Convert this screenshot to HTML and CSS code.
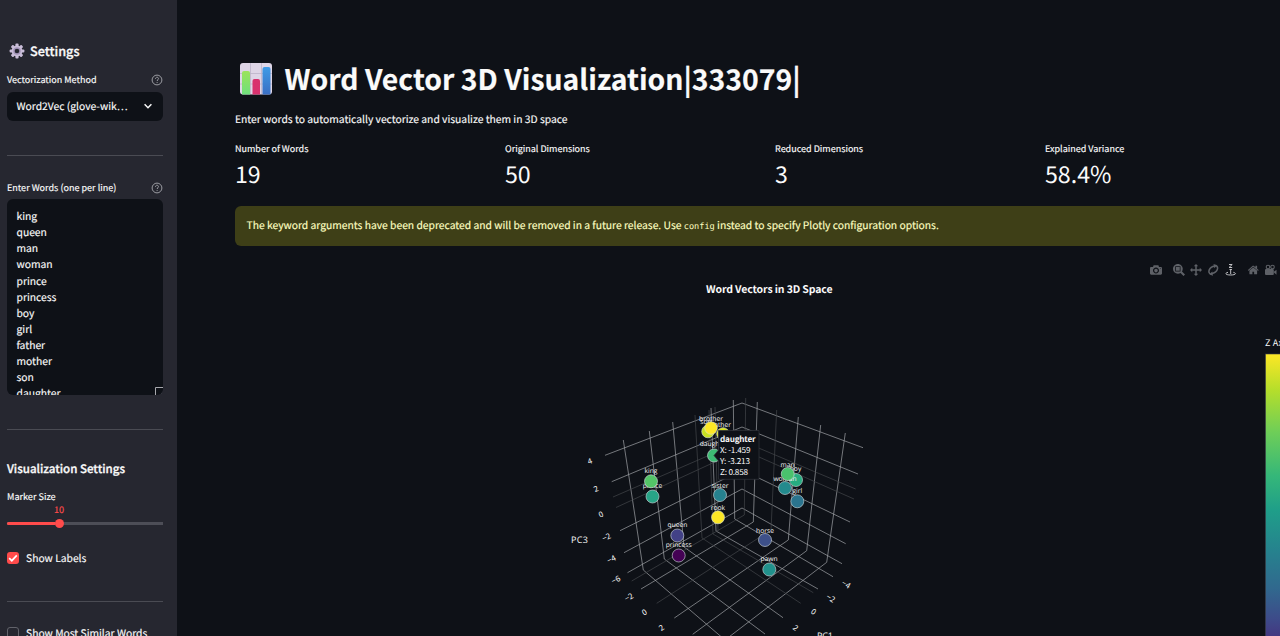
FILE: index.html
```html
<!DOCTYPE html>
<html lang="en">
<head>
<meta charset="utf-8">
<title>Word Vector 3D Visualization</title>
<link rel="stylesheet" href="styles.css">
</head>
<body>
<div class="app">
  <aside class="sidebar">
    <h2 class="side-title">
      <svg class="gear" viewBox="0 0 16 16"><g fill="#c9bdd8"><g id="teeth"><rect x="6.4" y="0.6" width="3.2" height="14.8" rx="1"/><rect x="0.6" y="6.4" width="14.8" height="3.2" rx="1"/></g><use href="#teeth" transform="rotate(45 8 8)"/><circle cx="8" cy="8" r="5.4"/></g><circle cx="8" cy="8" r="3.7" fill="#a393b8"/><circle cx="8" cy="8" r="2.3" fill="#262730"/></svg>
      <span>Settings</span>
    </h2>
    <div class="label-row method-label"><span>Vectorization Method</span>
      <svg class="help" viewBox="0 0 12 12"><circle cx="6" cy="6" r="4.9"/><path d="M4.5 4.8c0-2 3-2 3-.2 0 1.1-1.4 1.2-1.4 2.4M6.1 8v.9"/></svg></div>
    <div class="select"><span>Word2Vec (glove-wik…</span><svg viewBox="0 0 10 10" class="chev"><path d="M1.6 3.3 5 6.7l3.4-3.4"/></svg></div>
    <hr class="rule rule-a">
    <div class="label-row words-label"><span>Enter Words (one per line)</span>
      <svg class="help" viewBox="0 0 12 12"><circle cx="6" cy="6" r="4.9"/><path d="M4.5 4.8c0-2 3-2 3-.2 0 1.1-1.4 1.2-1.4 2.4M6.1 8v.9"/></svg></div>
    <div class="words">king<br>queen<br>man<br>woman<br>prince<br>princess<br>boy<br>girl<br>father<br>mother<br>son<br>daughter
      <svg class="grip" viewBox="0 0 8 8"><path d="M.5 8V.5H8M5.5 7.5l2-2"/></svg></div>
    <hr class="rule rule-b">
    <h3 class="sub-title">Visualization Settings</h3>
    <div class="marker-label">Marker Size</div>
    <div class="slider-value">10</div>
    <div class="slider"><div class="fill"></div><div class="thumb"></div></div>
    <div class="check check-a"><span class="box on"><svg viewBox="0 0 12 12"><path d="M2.2 6.2 4.8 8.7 9.8 3.4"/></svg></span><span>Show Labels</span></div>
    <hr class="rule rule-c">
    <div class="check check-b"><span class="box"></span><span>Show Most Similar Words</span></div>
  </aside>
  <main class="main">
    <h1 class="title">
      <svg class="chart-icon" viewBox="0 0 32 32"><defs><linearGradient id="g1" x2="0" y2="1"><stop stop-color="#9be35a"/><stop offset="1" stop-color="#6fe07c"/></linearGradient><linearGradient id="g2" x2="0" y2="1"><stop stop-color="#3f9be6"/><stop offset="1" stop-color="#3a6fc4"/></linearGradient></defs><rect width="32" height="31.500" rx="3" fill="#ded5e6"/><path d="M0 10.5h32M0 21h32M10.5 0v31M21.5 0v31" stroke="#bdb2c8" stroke-width=".8"/><path d="M2 31.500V10q0-2 2-2h4q2 0 2 2v21.500z" fill="url(#g1)"/><path d="M12.500 31.500V18q0-2 2-2h3.500q2 0 2 2v13.500z" fill="#d9306e"/><path d="M22.500 31.500V6q0-2 2-2h4q2 0 2 2v25.500z" fill="url(#g2)"/></svg>
      <span>Word Vector 3D Visualization|333079|</span>
    </h1>
    <p class="intro">Enter words to automatically vectorize and visualize them in 3D space</p>
    <div class="metrics">
      <div><div class="m-label">Number of Words</div><div class="m-value">19</div></div>
      <div><div class="m-label">Original Dimensions</div><div class="m-value">50</div></div>
      <div><div class="m-label">Reduced Dimensions</div><div class="m-value">3</div></div>
      <div><div class="m-label">Explained Variance</div><div class="m-value">58.4%</div></div>
    </div>
    <div class="alert"><span>The keyword arguments have been deprecated and will be removed in a future release. Use <code>config</code> instead to specify Plotly configuration options.</span></div>
    <svg class="plot" viewBox="235 246 1068 390" width="1068" height="390">
      <defs><linearGradient id="vir" x2="0" y2="1"><stop stop-color="#fde725"/><stop offset=".125" stop-color="#b5de2b"/><stop offset=".27" stop-color="#6ece58"/><stop offset=".42" stop-color="#35b779"/><stop offset=".54" stop-color="#1f9e89"/><stop offset=".68" stop-color="#26828e"/><stop offset=".81" stop-color="#31688e"/><stop offset=".92" stop-color="#3e4989"/><stop offset="1" stop-color="#472f7d"/></linearGradient></defs>
      <g class="modebar">
        <svg x="1150" y="264" width="12" height="12" viewBox="0 0 1000 1000"><path transform="matrix(1 0 0 -1 0 850)" d="m500 450c-83 0-150-67-150-150 0-83 67-150 150-150 83 0 150 67 150 150 0 83-67 150-150 150z m400 150h-120c-16 0-34 13-39 29l-31 93c-6 15-23 28-40 28h-340c-16 0-34-13-39-28l-31-94c-6-15-23-28-40-28h-120c-55 0-100-45-100-100v-450c0-55 45-100 100-100h800c55 0 100 45 100 100v450c0 55-45 100-100 100z m-400-550c-138 0-250 112-250 250 0 138 112 250 250 250 138 0 250-112 250-250 0-138-112-250-250-250z m365 380c-19 0-35 16-35 35 0 19 16 35 35 35 19 0 35-16 35-35 0-19-16-35-35-35z"/></svg>
        <svg x="1173" y="264" width="12" height="12" viewBox="0 0 1000 1000"><path transform="matrix(1 0 0 -1 0 850)" d="m1000-25l-250 251c40 63 63 138 63 218 0 224-182 406-407 406-224 0-406-182-406-406s183-406 407-406c80 0 155 22 218 62l250-250 125 125z m-812 250l0 438 437 0 0-438-437 0z m62 375l313 0 0-312-313 0 0 312z"/></svg>
        <svg x="1190" y="264" width="12" height="12" viewBox="0 0 1000 1000"><path transform="matrix(1 0 0 -1 0 850)" d="m1000 350l-187 188 0-125-250 0 0 250 125 0-188 187-187-187 125 0 0-250-250 0 0 125-188-188 186-187 0 125 252 0 0-250-125 0 187-188 188 188-125 0 0 250 250 0 0-126 187 188z"/></svg>
        <g class="orbit"><path d="M1211 274.300c-3.800-1.800-2.200-7.200 3.800-8.300M1215.500 265.200c3.800 1.800 2.200 7.200-3.800 8.300"/><path class="solid" d="M1213.500 264l3.500 1.200-2.600 3zM1213 275.800l-3.400-1.200 2.600-3z"/></g>
        <g class="turn"><path d="M1230.700 269v5M1229 264.500h3.200l-3.200 3h3.200M1229.500 269.500h2.400M1228 272.300c-4 1.200-2 2.700 2.700 2.700s6.500-1.500 2.700-2.700"/></g>
        <svg x="1247.500" y="264" width="11.500" height="12" viewBox="0 0 928 1000"><path transform="matrix(1 0 0 -1 0 850)" d="m786 296v-267q0-15-11-26t-25-10h-214v214h-143v-214h-214q-15 0-25 10t-11 26v267q0 1 0 2t0 2l321 264 321-264q1-1 1-4z m124 39l-34-41q-5-5-12-6h-2q-7 0-12 3l-386 322-386-322q-7-4-13-4-7 2-12 7l-35 41q-4 5-3 13t6 12l401 334q18 15 42 15t43-15l136-114v109q0 8 5 13t13 5h107q8 0 13-5t5-13v-227l122-102q5-5 6-12t-4-13z"/></svg>
        <g><circle cx="1268" cy="267" r="1.800" class="reel"/><circle cx="1272.500" cy="267" r="1.800" class="reel"/><rect x="1265" y="269" width="8.800" height="6" rx="1"/><path d="M1273.500 272l3-2.200v5z"/></g>
      </g>
      <text class="plot-title" x="706" y="293.200" textLength="126.500">Word Vectors in 3D Space</text>
      <text class="bar-title" x="1265" y="346" textLength="25">Z Axis</text>
      <rect x="1265.500" y="354" width="23" height="290" fill="url(#vir)" stroke="#3c4048" stroke-width=".6"/>
      <g class="grid">
        <path d="M605 455.300 742 403 863 447.700M611.700 481.700 742 427 858 474M620 530.700 742 470 850 522M624 552.700 742 489 845.700 543.700M627.500 572.700 742 508 842 563.700"/>
        <path d="M623.300 440 643.300 570 725 640M649.300 431 664.300 559 765 634M672.700 422 684 547 783 617.700M711 408 716 531 818 589M733.300 400 734.700 519 833 576.700"/>
        <path d="M757.300 402 753.300 522 641 589M798.300 417 788.300 540 674.300 618M820.700 425 806.700 550.700 692.700 634.300M845.300 433 826.700 562.300 725 640"/>
      </g>
      <g class="grid faint"><path d="M613 497 742 441 855.700 489M616 507.500 742 449.500 854 499M695 415 702 538 800.700 603.300M709 410 713 534 813.300 592.700M715 407 718 531M745.700 398 744.300 515 631.700 581M776.700 410 771 530 656.700 603.300"/></g>
      <g class="ticks">
        <text transform="translate(590 461.500) rotate(-20)">4</text><text transform="translate(596 489) rotate(-22)">2</text><text transform="translate(601 514.500) rotate(-23)">0</text><text transform="translate(606.500 537.500) rotate(-25)">−2</text><text transform="translate(611.500 559.500) rotate(-27)">−4</text><text transform="translate(616 580) rotate(-28)">−6</text>
        <text transform="translate(629 597.500) rotate(-30)">−2</text><text transform="translate(644.500 612.500) rotate(-32)">0</text><text transform="translate(661.500 628) rotate(-35)">2</text>
        <text transform="translate(846 584.500) rotate(31)">−4</text><text transform="translate(830.500 598.500) rotate(33)">−2</text><text transform="translate(813.500 612) rotate(35)">0</text><text transform="translate(795.500 628) rotate(37)">2</text>
      </g>
      <text class="axis" x="571" y="542.500" textLength="17">PC3</text><text class="axis" x="817" y="639" textLength="16">PC1</text>
      <g class="dots">
        <circle cx="723" cy="434" r="6.300" fill="#d8e219"/>
        <circle cx="796" cy="480" r="6.500" fill="#27ad81"/><circle cx="708" cy="431.500" r="6.300" fill="#c8e020"/>
      </g>
      <g class="names">
        <text x="711" y="420.500">brother</text><text x="706" y="424">son</text><text x="721.500" y="427.300">father</text><text x="714" y="446">daughter</text><text x="651" y="472.500">king</text><text x="652.500" y="488">prince</text><text x="720" y="487.500">sister</text><text x="718" y="509.500">rook</text><text x="677.500" y="527">queen</text><text x="678.700" y="547">princess</text><text x="787.500" y="467">man</text><text x="795.500" y="471">boy</text><text x="785" y="480.500">woman</text><text x="797.300" y="492.500">girl</text><text x="765" y="532.500">horse</text><text x="769" y="561">pawn</text>
      </g>
      <g class="dots">
        <circle cx="711" cy="428" r="6.300" fill="#fde725"/><circle cx="714" cy="455.500" r="6.500" fill="#3dbc74"/><circle cx="651" cy="481.300" r="6.500" fill="#54c568"/><circle cx="652.500" cy="496.500" r="6.500" fill="#28a487"/>
        <circle cx="720" cy="495" r="6.500" fill="#26818e"/><circle cx="718" cy="517.300" r="6.500" fill="#fde725"/><circle cx="677.300" cy="535.500" r="6.500" fill="#424186"/><circle cx="678.700" cy="555.500" r="6.500" fill="#440154"/>
        <circle cx="785" cy="488" r="6.500" fill="#238a8d"/><circle cx="787.700" cy="474" r="6.500" fill="#4ac16d"/><circle cx="797.300" cy="501.300" r="6.500" fill="#2b748e"/>
        <circle cx="765" cy="540" r="6.500" fill="#3d5089"/><circle cx="769.300" cy="569.500" r="6.500" fill="#21918c"/>
      </g>
      <g class="tip"><path d="M714 455.500 718.500 450V430.500H759V479.300H718.500V461z"/><text class="tip-b" x="720" y="441.500" textLength="35.500">daughter</text><text x="720" y="452.500" textLength="30.500">X: -1.459</text><text x="720" y="464" textLength="30">Y: -3.213</text><text x="720" y="474.500" textLength="28">Z: 0.858</text></g>
    </svg>
  </main>
</div>
</body>
</html>
```

FILE: styles.css
```css
* { box-sizing: border-box; }
body { margin: 0; height: 636px; overflow: hidden; background: #0e1117; color: #fafafa; font: 10.31px/16px "Noto Sans CJK SC", "Open Sans", sans-serif; text-rendering: geometricPrecision; -webkit-text-stroke: .15px currentColor; }
h1, h2, h3, p { margin: 0; }
.app { display: flex; height: 636px; overflow: hidden; }
.sidebar { flex: 0 0 177px; padding: 41px 14px 0 7px; background: #262730; white-space: nowrap; overflow: hidden; }
.side-title { display: flex; align-items: center; gap: 5px; height: 20px; padding-left: 2px; font-size: 12.7px; font-weight: 500; -webkit-text-stroke-width: .3px; }
.gear { width: 16px; height: 16px; }
.label-row { display: flex; justify-content: space-between; align-items: center; height: 16px; font-size: 9.05px; }
.label-row span { padding-bottom: 1px; }
.method-label { margin-top: 11px; }
.help { width: 12px; height: 12px; fill: none; stroke: #9c9da3; stroke-width: 1; }
.select { display: flex; align-items: center; justify-content: space-between; height: 29px; margin-top: 4px; padding: 0 10px 1px 9.5px; border-radius: 6px; background: #0e1117; }
.chev { width: 10px; height: 10px; fill: none; stroke: #fafafa; stroke-width: 1.5; }
.rule { height: 1px; border: 0; margin: 0; background: #4a4b53; }
.rule-a { margin-top: 34px; }
.words-label { margin-top: 24px; }
.words { position: relative; height: 196px; margin-top: 3px; padding: 9px 9.5px; border-radius: 6px; background: #0e1117; line-height: 16.12px; overflow: hidden; }
.grip { position: absolute; right: 0; bottom: 0; width: 8px; height: 8px; fill: none; stroke: #a7a8ad; stroke-width: 1; }
.rule-b { margin-top: 34px; }
.sub-title { margin-top: 29px; height: 20px; line-height: 20px; font-size: 11.55px; font-weight: 500; -webkit-text-stroke-width: .3px; }
.marker-label { margin-top: 9px; height: 16px; font-size: 9.1px; }
.slider-value { width: 104px; height: 14px; line-height: 11px; text-align: center; font-size: 9.1px; color: #ff4b4b; }
.slider { display: flex; align-items: center; height: 9px; margin-top: 1px; background: linear-gradient(#4d4e57, #4d4e57) center / 100% 3px no-repeat; }
.fill { width: 48px; height: 3px; border-radius: 2px 0 0 2px; background: #ff4b4b; }
.thumb { width: 9px; height: 9px; border-radius: 50%; background: #ff4b4b; }
.check { display: flex; align-items: center; gap: 7px; height: 18px; }
.check span:last-child { padding-bottom: 1px; }
.check-a { margin-top: 21px; }
.rule-c { margin-top: 34px; }
.check-b { margin-top: 22px; }
.box { width: 12px; height: 12px; border: 1px solid #62636b; border-radius: 3px; }
.box.on { border: 0; background: #ff4b4b; }
.box svg { display: block; width: 12px; fill: none; stroke: #fff; stroke-width: 1.7; }
.main { flex: 1; min-width: 0; padding: 58px 0 0 58px; overflow: hidden; white-space: nowrap; }
.title { display: flex; align-items: center; gap: 12.5px; height: 42px; padding-left: 5px; font-size: 28.35px; line-height: 42px; font-weight: 700; }
.chart-icon { width: 32px; height: 32px; }
.intro { margin-top: 11px; height: 16px; }
.metrics { display: grid; grid-template-columns: repeat(4, 258px); column-gap: 12px; margin-top: 14px; }
.m-label { height: 16px; font-size: 9.03px; }
.m-value { height: 36px; line-height: 33px; font-size: 23.2px; -webkit-text-stroke-width: 0; }
.alert { display: flex; align-items: center; width: 1068px; height: 40px; margin-top: 13px; padding: 0 11.5px 2px; border-radius: 6px; background: #3e3f17; color: #ffffc2; }
.alert code { font: 8.6px "DejaVu Sans Mono", monospace; -webkit-text-stroke-width: 0; }
.plot { display: block; }
.plot text { font-family: "Noto Sans CJK SC", "Open Sans", sans-serif; fill: #fafafa; -webkit-text-stroke-width: 0; }
.modebar { fill: #5e6167; }
.orbit path { fill: none; stroke: #5e6167; stroke-width: 1.5; }
.orbit .solid { fill: #5e6167; stroke: none; }
.modebar .reel { fill: none; stroke: #5e6167; stroke-width: 1.1; }
.turn path { fill: none; stroke: #c0c1c5; stroke-width: 1; }
.plot .plot-title { font-size: 10.5px; font-weight: 700; }
.plot .bar-title { font-size: 9px; }
.grid { fill: none; stroke: #a1a3a7; stroke-width: .7; }
.faint { stroke: #43464b; }
.ticks text { font-size: 7.8px; text-anchor: middle; dominant-baseline: central; }
.plot .axis { font-size: 9px; font-family: "Open Sans", sans-serif; }
.dots circle { stroke: #d5dfe0; stroke-width: .6; }
.plot .names text { font: 6.7px "Open Sans", sans-serif; text-anchor: middle; }
.tip path { fill: #0e1117; stroke: #2e3137; stroke-width: .8; }
.tip text { font-size: 8.2px; }
.plot .tip-b { font-weight: 700; }
```
